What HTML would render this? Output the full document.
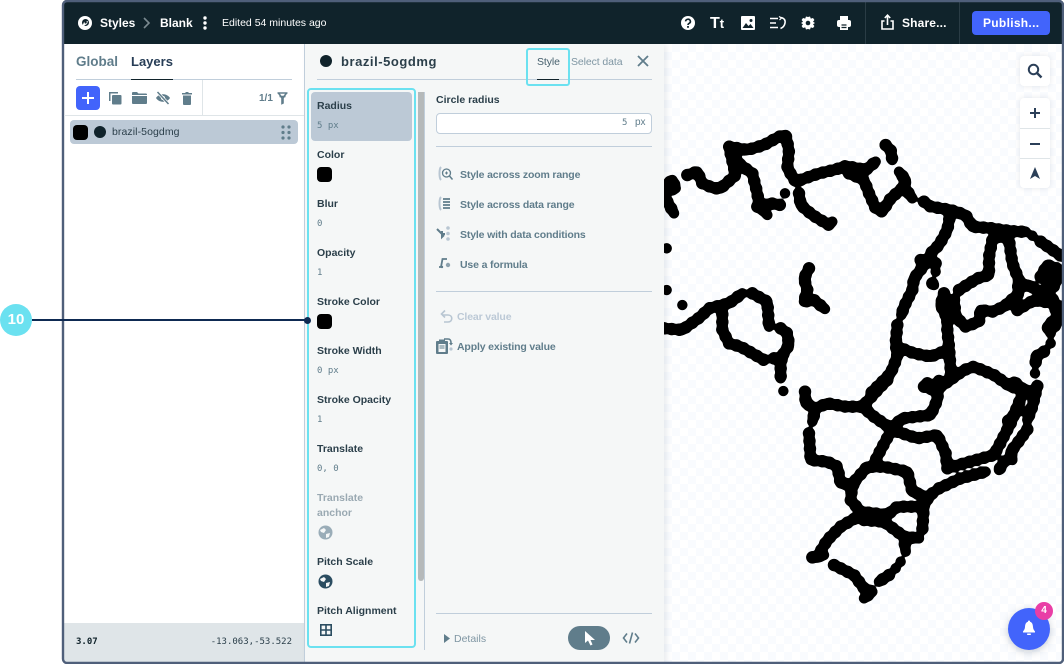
<!DOCTYPE html>
<html><head><meta charset="utf-8">
<style>
html,body{margin:0;padding:0;background:#fff}
#p{position:relative;width:1064px;height:664px;overflow:hidden;background:#fff;font-family:"Liberation Sans",sans-serif}
.a{position:absolute}
.t{position:absolute;white-space:nowrap;line-height:14px;margin-top:1px}
.b{font-weight:bold}
.m{font-family:"DejaVu Sans Mono","Liberation Mono",monospace}
.l{font-weight:bold;font-size:10.5px;color:#2b3f4a;left:317px}
.v{font-size:9px;color:#607d8b;left:317px}
.o{font-weight:bold;font-size:10.5px;color:#607d8b;left:460px;letter-spacing:-.15px}
.ln{position:absolute;background:#c0cedb;height:1px}
svg{position:absolute;overflow:visible}
</style></head><body><div id="p">

<div class="a" style="left:62px;top:0;width:1002px;height:664px;background:#fff;border-radius:5px;overflow:hidden">
 <!-- map -->
 <div class="a" style="left:602px;top:44px;width:400px;height:620px;background-color:#fff;background-image:conic-gradient(#f9fbfe 25%,#fff 0 50%,#f9fbfe 0 75%,#fff 0);background-size:16px 16px"></div>
 <!-- left panel -->
 <div class="a" style="left:2px;top:44px;width:240px;height:620px;background:#fff"></div>
 <div class="a" style="left:2px;top:623px;width:240px;height:39px;background:#dfe5e8"></div>
 <!-- center panel -->
 <div class="a" style="left:242px;top:44px;width:360px;height:620px;background:#f5f7f7;border-left:1px solid #c0cedb;box-sizing:border-box;box-shadow:3px 0 5px rgba(90,110,130,.12)"></div>
 <!-- header -->
 <div class="a" style="left:0;top:0;width:1002px;height:44px;background:#10232b"></div>
 <div class="a" style="left:803px;top:2px;width:1px;height:42px;background:#2a3c45"></div>
 <div class="a" style="left:897px;top:2px;width:1px;height:42px;background:#2a3c45"></div>
</div>

<!-- MAP -->
<svg style="left:0;top:0" width="1064" height="664" viewBox="0 0 1064 664">
<defs>
 <clipPath id="mc"><rect x="664" y="44" width="398" height="618"/></clipPath>
 <filter id="sm" filterUnits="userSpaceOnUse" x="654" y="34" width="420" height="640"><feGaussianBlur stdDeviation="1.1"/><feComponentTransfer><feFuncA type="linear" slope="7" intercept="-2.6"/></feComponentTransfer></filter>
 <path id="n1" d="M0 170L25 150L35 175L0 185M10 215L30 250M70 135L100 125L115 160L150 175L170 175L215 135L195 50L250 60L300 45L345 20L365 15L375 60L370 115L395 155L465 130L510 120L545 108L605 120L635 95M215 85L230 105L265 130L280 190L285 225L310 255M280 230L320 220L350 225M363 190L363 190M405 190L410 225L445 255L495 285L505 275M555 130L600 150L615 190L635 235L655 245L680 205L720 170L725 150L705 125M720 170L745 205M665 45L680 60L685 90M780 215L800 230L860 240L905 255L925 290L985 295L1015 300L1060 305L1085 305M1105 317L1105 317M1130 335L1195 380M860 245L850 300L825 345L800 370L790 395M770 390L815 400M785 400L750 445L745 480L720 530L712 555M815 425L815 425M805 460L810 465M840 490L830 525L850 565L850 600L855 650L860 720L860 750M885 480L940 445L975 435L975 380L985 330L1015 315L1035 330L1045 400L1065 450L1060 470L1095 465L1135 490L1170 510M870 510L875 560L905 590L945 575L950 540L985 545L1020 530L1065 490M1060 540L1110 510L1170 520L1180 560L1150 590L1160 610M1160 640L1160 640M1140 665L1115 680L1115 700M1113 730L1113 730M1120 770L1120 770M1190 530L1175 590M0 595L55 600L110 560L135 535L195 520L235 490M175 530L175 600L195 640L230 650L300 690M265 490L310 515L315 590M350 595L370 610L375 645L350 685L350 745M330 685L355 690M55 525L55 525M8 480L8 480M8 355L8 355M435 415L420 445L430 480L420 515L450 510L483 537M700 585L695 640L700 680L680 730L650 760L620 790M700 650L750 670L800 680L850 660M790 760L800 780M830 770L900 720L930 710L990 735L1040 770L1090 780M1130 440L1150 405L1190 420L1170 470L1130 440L1165 430"/>
 <path id="n2" d="M358 33L358 33M423 35L425 70L455 85L445 125M455 85L490 70L545 80L595 80L650 20L670 0M595 80L630 110L680 145L715 115L800 105L820 60L825 0M780 20L800 20M680 155L650 210L630 250M700 155L760 175L820 165L845 220L850 265L900 250L990 225L1040 130L1080 30L1050 5M1065 90L1030 125M1120 18L1105 80L1090 120M1090 148L1060 190L1040 215L1045 240M1020 245L1005 270M435 160L440 240L490 245L520 260L530 310L570 315M575 300L610 260L660 260L730 275L745 335L775 345M805 340L780 370L775 450M565 315L560 360L590 395L670 405L700 380L770 380M590 405L530 440L490 480L460 530M445 532L480 525M600 420L660 425L720 470L765 475M720 470L725 515M710 545L710 545M695 565L695 565M675 585L645 605M510 555L570 585L600 625L625 635L600 655M825 325L890 295L965 275"/>
</defs>
<g clip-path="url(#mc)"><g filter="url(#sm)" fill="none" stroke="#000" stroke-linecap="round" stroke-linejoin="round">
 <g transform="translate(664 130) scale(.33333)">
  <use href="#n1" stroke-width="31"/>
  <use href="#n1" stroke-width="37" stroke-dasharray="0 23"/>
 </g>
 <g transform="translate(664 380) scale(.33333)">
  <use href="#n2" stroke-width="31"/>
  <use href="#n2" stroke-width="37" stroke-dasharray="0 23"/>
 </g>
</g></g>
<!-- frame border -->
<rect x="63" y="1" width="1000" height="662" rx="4" fill="none" stroke="#4f5f7a" stroke-width="2.4"/>
</svg>

<!-- HEADER -->
<svg style="left:77px;top:15px" width="16" height="16" viewBox="0 0 16 16"><circle cx="8" cy="8" r="7" fill="#fff"/><circle cx="8.500" cy="7.500" r="3.500" fill="#10232b"/><path d="M5 12L7 7L11 6L10 9Z" fill="#fff"/><circle cx="8.600" cy="7.400" r="1.200" fill="#10232b"/></svg>
<div class="t b" style="left:100px;top:15px;color:#fff;font-size:12px">Styles</div>
<svg style="left:142px;top:17px" width="9" height="12"><path d="M2 1L7 6L2 11" fill="none" stroke="#7b8a90" stroke-width="1.600"/></svg>
<div class="t b" style="left:160px;top:15px;color:#fff;font-size:12px">Blank</div>
<svg style="left:202px;top:15px" width="6" height="16"><circle cx="3" cy="3" r="1.700" fill="#fff"/><circle cx="3" cy="8" r="1.700" fill="#fff"/><circle cx="3" cy="13" r="1.700" fill="#fff"/></svg>
<div class="t" style="left:222px;top:15px;color:#fff;font-size:10.5px">Edited 54 minutes ago</div>

<svg style="left:680px;top:15px" width="16" height="16"><circle cx="8" cy="8" r="7" fill="#fff"/><path d="M5.600 6.400a2.400 2.200 0 1 1 3.600 1.900c-.9.500-1.200.9-1.200 1.700" fill="none" stroke="#10232b" stroke-width="1.600"/><rect x="7.100" y="11" width="1.800" height="1.800" fill="#10232b"/></svg>
<div class="t b" style="left:710px;top:15px;color:#fff;font-size:16px;line-height:16px">T<span style="font-size:13px">t</span></div>
<svg style="left:741px;top:16px" width="14" height="14"><rect width="14" height="14" rx="1" fill="#fff"/><path d="M1.500 12L5 7L7.500 10L9.500 8L12.500 12Z" fill="#10232b"/><circle cx="10" cy="4.500" r="1.500" fill="#10232b"/></svg>
<svg style="left:770px;top:16px" width="16" height="14" fill="none" stroke="#fff" stroke-width="1.600"><path d="M0 2.500H8M0 7H6M0 11.500H8"/><path d="M10.500 1.500C14.500 2 15.500 4.500 15 7C14.600 9.500 13 11.500 10.500 12.500"/><path d="M9 .5L11.500 2L9.500 4" stroke-width="1.200"/></svg>
<svg style="left:800px;top:15px" width="16" height="16"><path d="M8 2L10 1.500 10.800 3.600 13 3 14.400 5 13 6.800 15 8 13 9.200 14.400 11 13 13 10.800 12.400 10 14.500 8 14 6 14.500 5.200 12.400 3 13 1.600 11 3 9.200 1 8 3 6.800 1.600 5 3 3 5.200 3.600 6 1.500Z" fill="#fff"/><circle cx="8" cy="8" r="2.300" fill="#10232b"/></svg>
<svg style="left:836px;top:15px" width="16" height="16"><rect x="4" y="1" width="8" height="4" fill="#fff"/><rect x="1" y="5" width="14" height="7" rx="2" fill="#fff"/><rect x="4" y="8" width="8" height="7" fill="#fff"/><path d="M5.500 10H10.500M5.500 12.500H10.500" stroke="#10232b" stroke-width="1.200"/></svg>
<svg style="left:881px;top:14px" width="13" height="16" fill="none" stroke="#fff" stroke-width="1.600"><path d="M3.500 7H1V15H12V7H9.500"/><path d="M6.500 11V1.500M3.800 4L6.500 1.200L9.200 4"/></svg>
<div class="t b" style="left:902px;top:15px;color:#fff;font-size:12px;letter-spacing:.15px">Share...</div>
<div class="a" style="left:972px;top:11px;width:78px;height:24px;background:#4264fb;border-radius:4px"></div>
<div class="t b" style="left:983px;top:15px;color:#fff;font-size:12px;letter-spacing:.3px">Publish...</div>

<!-- LEFT PANEL -->
<div class="t b" style="left:76px;top:54px;color:#607d8b;font-size:13.5px">Global</div>
<div class="t b" style="left:131px;top:54px;color:#273d56;font-size:13px">Layers</div>
<div class="ln" style="left:76px;top:79px;width:216px"></div>
<div class="a" style="left:131px;top:79px;width:42px;height:1px;background:#10232b"></div>
<div class="a" style="left:202px;top:80px;width:1px;height:35px;background:#dfe5e8"></div>
<div class="a" style="left:64px;top:115px;width:240px;height:1px;background:#dfe5e8"></div>
<div class="a" style="left:76px;top:86px;width:24px;height:24px;background:#4264fb;border-radius:4px"></div>
<svg style="left:76px;top:86px" width="24" height="24"><path d="M12 6V18M6 12H18" stroke="#fff" stroke-width="2"/></svg>
<svg style="left:109px;top:92px" width="13" height="13" fill="#607d8b"><path d="M0 0H9V1.500H1.500V9H0Z"/><rect x="3" y="3" width="9.500" height="9.500" rx="1"/></svg>
<svg style="left:132px;top:92px" width="15" height="12" fill="#607d8b"><path d="M0 1a1 1 0 0 1 1-1H5L6.500 1.500H14a1 1 0 0 1 1 1V3H0Z"/><path d="M0 4H15V11a1 1 0 0 1-1 1H1a1 1 0 0 1-1-1Z"/></svg>
<svg style="left:155px;top:91px" width="16" height="14" fill="none"><path d="M1 7C4 2 12 2 15 7C12 12 4 12 1 7Z" fill="#607d8b"/><circle cx="8" cy="7" r="2" fill="#fff"/><path d="M2.500 1L13.500 13" stroke="#fff" stroke-width="3"/><path d="M2.500 1L13.500 13" stroke="#607d8b" stroke-width="1.500"/></svg>
<svg style="left:182px;top:92px" width="10" height="13" fill="#607d8b"><path d="M3.500 0H6.500V1H10V2.500H0V1H3.500Z"/><path d="M1 3.500H9V12a1 1 0 0 1-1 1H2a1 1 0 0 1-1-1Z"/></svg>
<div class="t b" style="left:259px;top:91px;color:#607d8b;font-size:10px">1/1</div>
<svg style="left:277px;top:92px" width="11" height="12" fill="none" stroke="#607d8b" stroke-width="1.600"><path d="M.5 1H10.500M2.500 4.500H8.500"/><path d="M1.500 1L5 6V11.500L6 11V6L9.500 1"/></svg>
<div class="a" style="left:70px;top:120px;width:228px;height:24px;background:#bcc9d6;border-radius:4px"></div>
<div class="a" style="left:73px;top:125px;width:15px;height:15px;background:#000;border-radius:4px"></div>
<div class="a" style="left:94px;top:126px;width:12px;height:12px;background:#10232b;border-radius:50%"></div>
<div class="t" style="left:112px;top:124px;color:#2b3f4a;font-size:10.5px;letter-spacing:.08px">brazil-5ogdmg</div>
<svg style="left:281px;top:125px" width="10" height="15" fill="#607d8b"><circle cx="2" cy="2" r="1.600"/><circle cx="8" cy="2" r="1.600"/><circle cx="2" cy="7.500" r="1.600"/><circle cx="8" cy="7.500" r="1.600"/><circle cx="2" cy="13" r="1.600"/><circle cx="8" cy="13" r="1.600"/></svg>
<div class="t b m" style="left:76px;top:634px;color:#10232b;font-size:9px">3.07</div>
<div class="t m" style="right:772px;top:634px;color:#2b3f4a;font-size:9px">-13.063,-53.522</div>

<!-- PANEL HEADER -->
<div class="a" style="left:320px;top:55px;width:12px;height:12px;background:#10232b;border-radius:50%"></div>
<div class="t b" style="left:341px;top:54px;color:#2b3f4a;font-size:13px;letter-spacing:.55px">brazil-5ogdmg</div>
<div class="t" style="left:537px;top:54px;color:#46606d;font-size:10.5px;letter-spacing:-.1px">Style</div>
<div class="t" style="left:571px;top:54px;color:#7f96a3;font-size:10.5px;letter-spacing:-.1px">Select data</div>
<div class="ln" style="left:317px;top:79px;width:335px"></div>
<div class="a" style="left:537px;top:79px;width:22px;height:1px;background:#10232b"></div>
<div class="a" style="left:526px;top:48px;width:44px;height:38px;box-sizing:border-box;border:2px solid #6be1f0;border-radius:3px"></div>
<svg style="left:637px;top:55px" width="12" height="12"><path d="M1 1L11 11M11 1L1 11" stroke="#607d8b" stroke-width="1.800"/></svg>

<!-- PROPERTY LIST -->
<div class="a" style="left:311px;top:92px;width:101px;height:49px;background:#bcc9d6;border-radius:4px"></div>
<div class="a" style="left:307px;top:88px;width:109px;height:560px;box-sizing:border-box;border:2px solid #6be1f0;border-radius:4px"></div>
<div class="a" style="left:424px;top:92px;width:1px;height:558px;background:#c0cedb"></div>
<div class="a" style="left:418px;top:92px;width:6px;height:489px;background:#b5b9ba;border-radius:0 0 3px 3px"></div>

<div class="t l" style="top:98px">Radius</div><div class="t v m" style="top:118px">5 px</div>
<div class="t l" style="top:147px">Color</div><div class="a" style="left:317px;top:167px;width:15px;height:15px;background:#000;border-radius:4px"></div>
<div class="t l" style="top:196px">Blur</div><div class="t v m" style="top:216px">0</div>
<div class="t l" style="top:245px">Opacity</div><div class="t v m" style="top:265px">1</div>
<div class="t l" style="top:294px">Stroke Color</div><div class="a" style="left:317px;top:314px;width:15px;height:15px;background:#000;border-radius:4px"></div>
<div class="t l" style="top:343px">Stroke Width</div><div class="t v m" style="top:363px">0 px</div>
<div class="t l" style="top:392px">Stroke Opacity</div><div class="t v m" style="top:412px">1</div>
<div class="t l" style="top:441px">Translate</div><div class="t v m" style="top:461px">0, 0</div>
<div class="t l" style="top:490px;color:#9aa9b2">Translate</div><div class="t l" style="top:505px;color:#9aa9b2">anchor</div>
<svg style="left:318px;top:525px" width="15" height="15"><circle cx="7.500" cy="7.500" r="7" fill="#9aadb8"/><path d="M2 5L6 3L8 5L6 8L3 7ZM8 9L12 8L11 12L8 13Z" fill="#f5f7f7"/></svg>
<div class="t l" style="top:554px">Pitch Scale</div>
<svg style="left:318px;top:574px" width="15" height="15"><circle cx="7.500" cy="7.500" r="7" fill="#2b4d61"/><path d="M2 5L6 3L8 5L6 8L3 7ZM8 9L12 8L11 12L8 13Z" fill="#f5f7f7"/></svg>
<div class="t l" style="top:603px">Pitch Alignment</div>
<svg style="left:320px;top:624px" width="12" height="12" fill="none" stroke="#2b4d61" stroke-width="1.600"><rect x=".8" y=".8" width="10.400" height="10.400"/><path d="M6 1V11M1 6H11"/></svg>

<!-- RIGHT SIDE -->
<div class="t l" style="left:436px;top:92px">Circle radius</div>
<div class="a" style="left:436px;top:113px;width:216px;height:21px;box-sizing:border-box;background:#fff;border:1px solid #c0cedb;border-radius:4px"></div>
<div class="t v m" style="left:622px;top:115px">5</div>
<div class="t v" style="left:635px;top:115px;font-size:10px">px</div>
<div class="ln" style="left:436px;top:146px;width:216px"></div>

<svg style="left:438px;top:166px" width="16" height="16" fill="none" stroke="#607d8b"><path d="M3 1C1 3 1 12 3 14" stroke="#b8c6d2" stroke-width="2"/><circle cx="8.500" cy="7" r="4" stroke-width="1.300"/><path d="M11.500 10L14.500 13.500" stroke-width="1.500"/><path d="M7 7H10M8.500 5.500V8.500"/></svg>
<div class="t o" style="top:167px">Style across zoom range</div>
<svg style="left:438px;top:196px" width="16" height="16" fill="none"><path d="M3 1C1 3 1 12 3 14" stroke="#b8c6d2" stroke-width="2"/><path d="M5 3H12M5 6H12M5 9H12M5 12H12" stroke="#607d8b" stroke-width="1.800"/></svg>
<div class="t o" style="top:197px">Style across data range</div>
<svg style="left:436px;top:226px" width="16" height="16"><path d="M1 3L6 8H9M6 5V11L8 9" fill="none" stroke="#607d8b" stroke-width="2"/><circle cx="12" cy="2" r="1.800" fill="#b8c6d2"/><circle cx="12" cy="7.500" r="1.800" fill="#b8c6d2"/><circle cx="12" cy="13" r="1.800" fill="#b8c6d2"/></svg>
<div class="t o" style="top:227px">Style with data conditions</div>
<svg style="left:438px;top:257px" width="15" height="14"><path d="M1 10H3L4.500 2H9" fill="none" stroke="#607d8b" stroke-width="1.800"/><circle cx="4" cy="10" r="1.200" fill="#607d8b"/><circle cx="10" cy="8" r="2.200" fill="#8ea2ae"/></svg>
<div class="t o" style="top:257px">Use a formula</div>
<div class="ln" style="left:436px;top:291px;width:216px"></div>
<svg style="left:440px;top:309px" width="13" height="14" fill="none" stroke="#b8c6d2" stroke-width="1.600"><path d="M2 6H8C13 6 13 13 8 13H4"/><path d="M5 1.500L1.500 5L5 8.500"/></svg>
<div class="t o" style="left:457px;top:309px;color:#bcc9d6">Clear value</div>
<svg style="left:436px;top:337px" width="18" height="17"><rect x="0" y="4" width="12" height="13" rx="1" fill="#607d8b"/><rect x="3" y="2.500" width="6" height="3" fill="#607d8b"/><rect x="2.500" y="7" width="7" height="8" fill="#f5f7f7"/><path d="M3.500 9H8.500M3.500 11H8.500" stroke="#607d8b"/><path d="M8 2H12C14 2 15 3 15 6" fill="none" stroke="#607d8b" stroke-width="1.600"/><path d="M13 6H17L15 8.500Z" fill="#607d8b"/><circle cx="15" cy="12" r="1.600" fill="#b8c6d2"/></svg>
<div class="t o" style="left:457px;top:339px">Apply existing value</div>
<div class="ln" style="left:436px;top:613px;width:216px"></div>
<svg style="left:443px;top:634px" width="8" height="9"><path d="M1 0L7 4.500L1 9Z" fill="#607d8b"/></svg>
<div class="t" style="left:454px;top:631px;color:#7f96a3;font-size:10.5px">Details</div>
<div class="a" style="left:568px;top:626px;width:42px;height:24px;background:#607d8b;border-radius:12px"></div>
<svg style="left:584px;top:631px" width="12" height="15"><path d="M1 0V12L4 9.500L6.500 14.500L8.500 13.500L6.500 9H11Z" fill="#fff"/></svg>
<svg style="left:622px;top:631px" width="18" height="14" fill="none" stroke="#607d8b" stroke-width="1.600"><path d="M5 2.500L1.500 7L5 11.500M13 2.500L16.500 7L13 11.500M10.500 1.500L7.500 12.500"/></svg>

<!-- MAP CONTROLS -->
<div class="a" style="left:1020px;top:56px;width:30px;height:30px;background:#fff;border-radius:4px;box-shadow:0 0 6px rgba(30,50,80,.12)"></div>
<svg style="left:1027px;top:63px" width="16" height="16" fill="none" stroke="#2b3f58" stroke-width="2"><circle cx="6.500" cy="6.500" r="4.700"/><path d="M10 10L14.500 14.500" stroke-width="2.400"/></svg>
<div class="a" style="left:1020px;top:98px;width:30px;height:90px;background:#fff;border-radius:4px;box-shadow:0 0 6px rgba(30,50,80,.12)"></div>
<div class="a" style="left:1020px;top:128px;width:30px;height:1px;background:#dfe5e8"></div>
<div class="a" style="left:1020px;top:158px;width:30px;height:1px;background:#dfe5e8"></div>
<svg style="left:1029px;top:107px" width="12" height="12"><path d="M6 1V11M1 6H11" stroke="#2b3f58" stroke-width="2"/></svg>
<svg style="left:1029px;top:138px" width="12" height="12"><path d="M1 6H11" stroke="#2b3f58" stroke-width="2"/></svg>
<svg style="left:1029px;top:167px" width="12" height="13"><path d="M6 0L11 12L6 9L1 12Z" fill="#2b3f58"/></svg>

<div class="a" style="left:1008px;top:608px;width:42px;height:42px;background:#4264fb;border-radius:50%;box-shadow:0 2px 8px rgba(30,50,80,.25)"></div>
<svg style="left:1023px;top:620px" width="12" height="16" fill="#fff"><path d="M6 0.500A1 1 0 0 1 7 1.800C9.300 2.400 9.800 4.500 10 7C10.100 8.800 10.800 10 12 11.500V12.500H0V11.500C1.200 10 1.900 8.800 2 7C2.200 4.500 2.700 2.400 5 1.800A1 1 0 0 1 6 0.500Z"/><rect x="4" y="13.500" width="4" height="1.500" rx=".7"/></svg>
<div class="a" style="left:1035px;top:602px;width:18px;height:18px;background:#e93ea6;border-radius:50%;color:#fff;font-weight:bold;font-size:10px;line-height:18px;text-align:center">4</div>

<!-- CALLOUT -->
<div class="a" style="left:32px;top:319px;width:274px;height:2px;background:#0e2a52"></div>
<div class="a" style="left:304px;top:316.500px;width:7px;height:7px;background:#0e2a52;border-radius:50%"></div>
<div class="a" style="left:0;top:304px;width:32px;height:32px;background:#6be1f0;border-radius:50%;color:#fff;font-weight:bold;font-size:15px;line-height:32px;text-align:center">10</div>

</div></body></html>
